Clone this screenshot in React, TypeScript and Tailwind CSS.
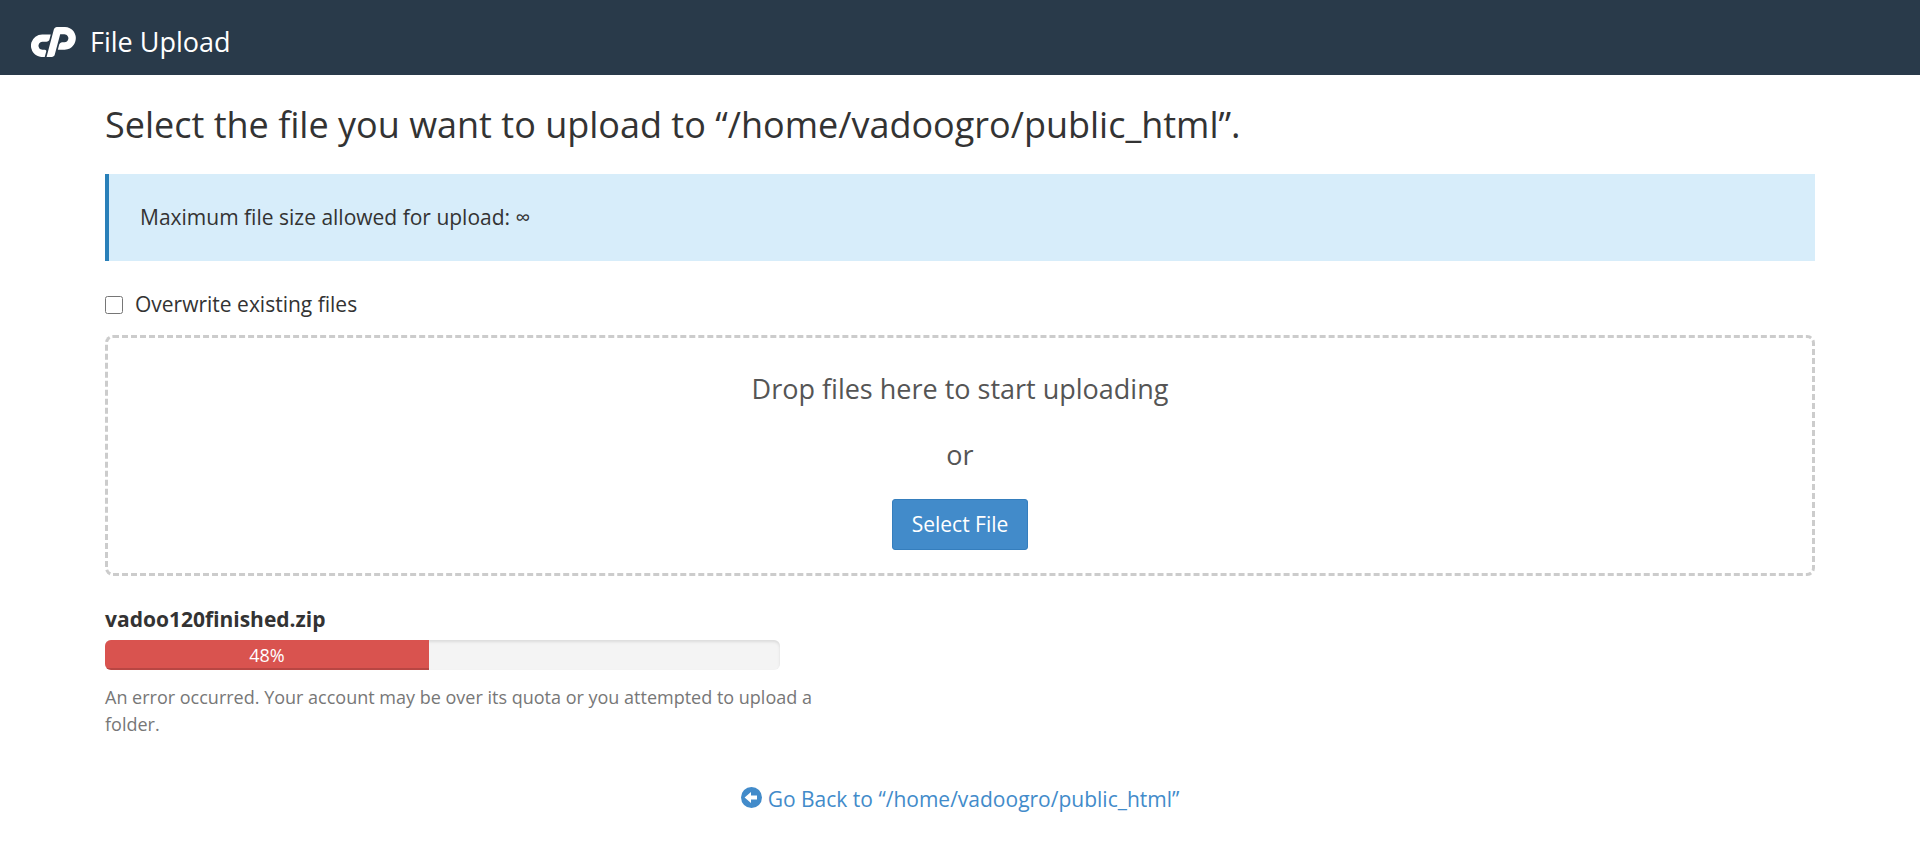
import { type JSX } from "react";

const uploadPath = "/home/vadoogro/public_html";

interface Upload {
  name: string;
  percent: number;
  message: string;
}

const uploads: Upload[] = [
  {
    name: "vadoo120finished.zip",
    percent: 48,
    message:
      "An error occurred. Your account may be over its quota or you attempted to upload a folder.",
  },
];

function Logo(): JSX.Element {
  return (
    <svg viewBox="0 0 359 240" className="h-[30px] w-[45px] fill-white" aria-hidden="true">
      <path d="M89.700 59.100h67.800L147 99.300a25.400 25.400 0 0 1-9 13.500 24.300 24.300 0 0 1-15.300 5.100H91.200a30.500 30.500 0 0 0-19 6.300 33 33 0 0 0-11.550 17.100 31.900 31.900 0 0 0-.45 15.300 33.100 33.100 0 0 0 5.850 12.750 30.300 30.300 0 0 0 10.800 9 31.400 31.400 0 0 0 14.400 3.300h19.200a10.800 10.800 0 0 1 8.850 4.350 10.400 10.400 0 0 1 2 9.750l-12 44.400h-21a84.800 84.800 0 0 1-39.750-9.450 89.800 89.800 0 0 1-30-25.050A88.400 88.400 0 0 1 1.800 170.100a87.500 87.500 0 0 1-.6-41.100l1.200-4.500A90 90 0 0 1 89.700 59.100Z" />
      <path d="M123.900 240 182.700 18.600a25.400 25.400 0 0 1 9-13.500A24.300 24.300 0 0 1 207 0h62.700a84.600 84.600 0 0 1 39.750 9.450 89.200 89.200 0 0 1 46.650 60.600 83.800 83.800 0 0 1-1.200 41l-1.200 4.500a89.900 89.900 0 0 1-12 26.550 87.650 87.650 0 0 1-73.200 39.150h-54.300l10.800-40.500a25.400 25.400 0 0 1 9-13.200 24.300 24.300 0 0 1 15.300-5.100h17.400a31.560 31.560 0 0 0 30.600-23.700 29.400 29.400 0 0 0 .45-14.700 33.100 33.100 0 0 0-5.850-12.750 31.760 31.760 0 0 0-10.800-9.150 30.600 30.600 0 0 0-14.400-3.450h-33.600l-43.800 162.900a25.400 25.400 0 0 1-9 13.200 23.900 23.900 0 0 1-15 5.100Z" />
    </svg>
  );
}

function BackIcon(): JSX.Element {
  return (
    <svg viewBox="0 0 21 21" className="mb-1 size-[21px]" aria-hidden="true">
      <circle cx="10.5" cy="10.5" r="10.5" className="fill-current" />
      <path d="M3.600 10.500 10 5V8.600H16V12.400H10V16Z" className="fill-white" />
    </svg>
  );
}

function UploadProgress({ name, percent, message }: Upload): JSX.Element {
  return (
    <div className="max-w-[720px]">
      <h2 className="text-[21px] leading-[30px] font-bold">{name}</h2>
      <div
        role="progressbar"
        aria-label={name}
        aria-valuenow={percent}
        aria-valuemin={0}
        aria-valuemax={100}
        className="mt-1.5 flex h-[30px] max-w-[675px] overflow-hidden rounded-md bg-[#f4f4f4] shadow-[inset_0_2px_3px_rgba(0,0,0,0.1)]"
      >
        <div
          className="bg-[#d9534f] text-center text-lg leading-[30px] text-white shadow-[inset_0_-2px_0_rgba(0,0,0,0.15)]"
          style={{ width: `${percent}%` }}
        >
          {percent}%
        </div>
      </div>
      <p className="mt-3.5 text-lg leading-[27px] text-[#777]">{message}</p>
    </div>
  );
}

export default function App(): JSX.Element {
  return (
    <div className="min-h-screen bg-white font-['Open_Sans',sans-serif] text-[21px] leading-[30px] text-[#333]">
      {/* Top bar */}
      <header className="flex h-[75px] items-center gap-3.5 bg-[#293a4a] px-[31px] pt-2 text-white">
        <Logo />
        <span className="text-[27px] leading-9">File Upload</span>
      </header>

      <main className="px-[105px] pt-[25px] pb-10">
        <h1 className="text-4xl leading-[50px]">
          Select the file you want to upload to “{uploadPath}”.
        </h1>

        <div className="mt-6 border-l-4 border-[#2980b9] bg-[#d7edfa] px-[31px] py-7">
          <p className="leading-[31px]">Maximum file size allowed for upload: ∞</p>
        </div>

        <div className="mt-7 flex items-center gap-3">
          <input id="overwrite" type="checkbox" className="mt-0.5 size-[18px]" />
          <label htmlFor="overwrite">Overwrite existing files</label>
        </div>

        {/* Drop zone */}
        <div className="mt-4 flex flex-col items-center rounded-lg border-3 border-dashed border-[#ccc] pt-[33px] pb-[23px] text-[27px] leading-9 text-[#555]">
          <p>Drop files here to start uploading</p>
          <p className="mt-[30px]">or</p>
          <button
            type="button"
            className="mt-[26px] rounded-[3px] border border-[#357ebd] bg-[#428bca] px-[19px] py-2.5 text-[21px] leading-[29px] text-white"
          >
            Select File
          </button>
        </div>

        <section className="mt-7">
          {uploads.map((upload: Upload) => (
            <UploadProgress key={upload.name} {...upload} />
          ))}
        </section>

        <div className="mt-[46px] flex justify-center">
          <a href="#back" className="flex items-center gap-1.5 text-[#428bca]">
            <BackIcon />
            Go Back to “{uploadPath}”
          </a>
        </div>
      </main>
    </div>
  );
}
